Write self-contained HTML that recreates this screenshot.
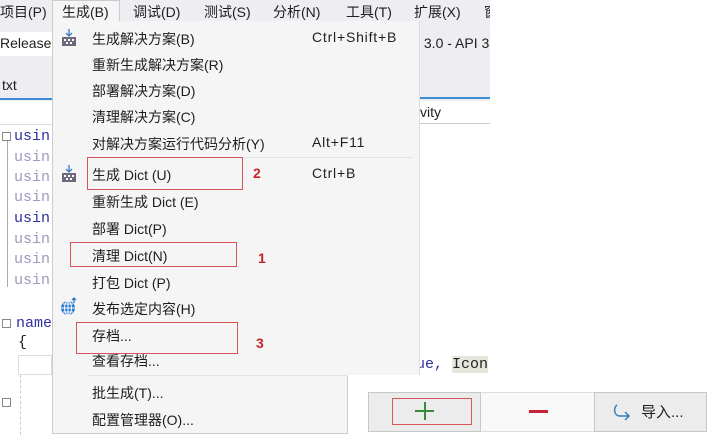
<!DOCTYPE html>
<html><head><meta charset="utf-8"><style>
*{margin:0;padding:0;box-sizing:border-box}
body{width:716px;height:436px;overflow:hidden;background:#fff;position:relative;font-family:"Liberation Sans","Noto Sans CJK SC",sans-serif;font-size:14px;color:#1e1e1e}
.a{position:absolute;white-space:nowrap}
.mono{font-family:"Liberation Mono","Noto Sans CJK SC",monospace;font-size:15px}
.rb{position:absolute;border:1.5px solid #d9545b}
.num{position:absolute;color:#c8222b;font-weight:bold;font-size:14px}
.sc{letter-spacing:0.8px}
</style></head><body>
<!-- menu bar -->
<div class="a" style="left:0;top:0;width:490px;height:21px;background:#eeeef2"></div>
<div class="a" style="left:52px;top:0;width:68px;height:22px;background:#f5f5f5;border:1px solid #ccc;border-bottom:none"></div>
<div class="a" style="left:0;top:2px">项目(P)</div>
<div class="a" style="left:62px;top:2px">生成(B)</div>
<div class="a" style="left:133px;top:2px">调试(D)</div>
<div class="a" style="left:204px;top:2px">测试(S)</div>
<div class="a" style="left:273px;top:2px">分析(N)</div>
<div class="a" style="left:346px;top:2px">工具(T)</div>
<div class="a" style="left:414px;top:2px">扩展(X)</div>
<div class="a" style="left:484px;top:2px;width:6px;overflow:hidden">窗</div>
<!-- left panel -->
<div class="a" style="left:0;top:21px;width:52px;height:80px;background:#eeeef2"></div>
<div class="a" style="left:0;top:32px;width:52px;height:24px;background:#fff"></div>
<div class="a" style="left:0;top:35px">Release</div>
<div class="a" style="left:2px;top:77px">txt</div>
<div class="a" style="left:0;top:98px;width:52px;height:2px;background:#3b8ed6"></div>
<div class="a" style="left:0;top:124px;width:52px;height:1px;background:#ddd"></div>
<!-- right of menu -->
<div class="a" style="left:420px;top:21px;width:70px;height:80px;background:#eeeef2"></div>
<div class="a" style="left:420px;top:35px;width:70px;overflow:hidden">&nbsp;3.0 - API 33</div>
<div class="a" style="left:420px;top:97px;width:70px;height:2px;background:#3b8ed6"></div>
<div class="a" style="left:420px;top:104px;">vity</div>
<div class="a" style="left:420px;top:123px;width:70px;height:1px;background:#ccc"></div>
<!-- code -->
<div class="a" style="left:2px;top:132px;width:9px;height:9px;border:1px solid #888"></div>
<div class="a" style="left:7px;top:141px;width:1px;height:146px;background:#aaa"></div>
<div class="a mono" style="left:14px;top:128px;color:#3030a0">usin</div>
<div class="a mono" style="left:14px;top:149px;color:#9a9ac0">usin</div>
<div class="a mono" style="left:14px;top:169px;color:#9a9ac0">usin</div>
<div class="a mono" style="left:14px;top:189px;color:#9a9ac0">usin</div>
<div class="a mono" style="left:14px;top:210px;color:#3030a0">usin</div>
<div class="a mono" style="left:14px;top:231px;color:#9a9ac0">usin</div>
<div class="a mono" style="left:14px;top:251px;color:#9a9ac0">usin</div>
<div class="a mono" style="left:14px;top:272px;color:#9a9ac0">usin</div>
<div class="a" style="left:2px;top:319px;width:9px;height:9px;border:1px solid #888"></div>
<div class="a mono" style="left:16px;top:315px;color:#3030a0">name</div>
<div class="a mono" style="left:18px;top:334px">{</div>
<div class="a" style="left:18px;top:355px;width:34px;height:20px;border:1px solid #ddd"></div>
<div class="a" style="left:2px;top:398px;width:9px;height:9px;border:1px solid #888"></div>
<div class="a" style="left:20px;top:375px;width:1px;height:60px;border-left:1px dashed #ccc"></div>
<div class="a mono" style="left:416px;top:356px;color:#3030a0">ue,&nbsp;<span style="background:#e6e6dc;color:#222">Icon</span></div>
<!-- dropdown -->
<div class="a" style="left:52px;top:21px;width:368px;height:354px;background:#f5f5f5;border-left:1px solid #ccc;border-right:1px solid #ddd"></div>
<div class="a" style="left:52px;top:375px;width:296px;height:59px;background:#f5f5f5;border:1px solid #ccc;border-top:none"></div>
<div class="a" style="left:88px;top:157px;width:325px;height:1px;background:#e2e2e2"></div>
<div class="a" style="left:88px;top:375px;width:260px;height:1px;background:#e2e2e2"></div>
<svg class="a" style="left:60px;top:28px" width="18" height="20"><path d="M9 1v6M6 5l3 3 3-3" stroke="#3a7cc0" fill="none" stroke-width="1.3"/><rect x="2" y="9" width="14" height="9" fill="#6a6a7a"/><g fill="#fff"><rect x="4" y="11" width="2" height="2"/><rect x="8" y="11" width="2" height="2"/><rect x="12" y="11" width="2" height="2"/><rect x="6" y="14" width="2" height="2"/><rect x="10" y="14" width="2" height="2"/></g></svg>
<svg class="a" style="left:60px;top:164px" width="18" height="20"><path d="M9 1v6M6 5l3 3 3-3" stroke="#3a7cc0" fill="none" stroke-width="1.3"/><rect x="2" y="9" width="14" height="9" fill="#6a6a7a"/><g fill="#fff"><rect x="4" y="11" width="2" height="2"/><rect x="8" y="11" width="2" height="2"/><rect x="12" y="11" width="2" height="2"/><rect x="6" y="14" width="2" height="2"/><rect x="10" y="14" width="2" height="2"/></g></svg>
<svg class="a" style="left:59px;top:297px" width="20" height="20"><circle cx="9" cy="11" r="7" fill="#2a7cd0"/><path d="M2 11h14M9 4v14M4 7h10M4 15h10" stroke="#fff" stroke-width="1"/><ellipse cx="9" cy="11" rx="3.5" ry="7" fill="none" stroke="#fff"/><path d="M15 1v5M13 3l2-2 2 2" stroke="#2a7cd0" fill="none" stroke-width="1.3"/></svg>
<div class="a" style="left:92px;top:29px">生成解决方案(B)</div><div class="a sc" style="left:312px;top:29px">Ctrl+Shift+B</div>
<div class="a" style="left:92px;top:55px">重新生成解决方案(R)</div>
<div class="a" style="left:92px;top:81px">部署解决方案(D)</div>
<div class="a" style="left:92px;top:107px">清理解决方案(C)</div>
<div class="a" style="left:92px;top:134px">对解决方案运行代码分析(Y)</div><div class="a sc" style="left:312px;top:134px">Alt+F11</div>
<div class="a" style="left:92px;top:165px">生成 Dict (U)</div><div class="a sc" style="left:312px;top:165px">Ctrl+B</div>
<div class="a" style="left:92px;top:192px">重新生成 Dict (E)</div>
<div class="a" style="left:92px;top:219px">部署 Dict(P)</div>
<div class="a" style="left:92px;top:246px">清理 Dict(N)</div>
<div class="a" style="left:92px;top:273px">打包 Dict (P)</div>
<div class="a" style="left:92px;top:299px">发布选定内容(H)</div>
<div class="a" style="left:92px;top:326px">存档...</div>
<div class="a" style="left:92px;top:351px">查看存档...</div>
<div class="a" style="left:92px;top:383px">批生成(T)...</div>
<div class="a" style="left:92px;top:410px">配置管理器(O)...</div>
<div class="rb" style="left:87px;top:157px;width:156px;height:33px"></div>
<div class="rb" style="left:70px;top:242px;width:167px;height:25px"></div>
<div class="rb" style="left:76px;top:322px;width:162px;height:32px"></div>
<div class="num" style="left:253px;top:165px">2</div>
<div class="num" style="left:258px;top:250px">1</div>
<div class="num" style="left:256px;top:335px">3</div>
<!-- button panel -->
<div class="a" style="left:348px;top:378px;width:368px;height:58px;background:#fff"></div>
<div class="a" style="left:368px;top:392px;width:113px;height:40px;background:#ececec;border:1px solid #c8c8c8"></div>
<div class="a" style="left:481px;top:392px;width:113px;height:40px;background:#f8f8f8;border-top:1px solid #ddd;border-bottom:1px solid #ddd"></div>
<div class="a" style="left:594px;top:392px;width:113px;height:40px;background:#ececec;border:1px solid #c8c8c8"></div>
<div class="rb" style="left:392px;top:398px;width:80px;height:27px"></div>
<div class="a" style="left:424px;top:402px;width:1.5px;height:18px;background:#3a8a3a"></div>
<div class="a" style="left:415px;top:410px;width:19px;height:1.5px;background:#3a8a3a"></div>
<div class="a" style="left:529px;top:410px;width:19px;height:3px;background:#c8223a"></div>
<svg class="a" style="left:611px;top:402px" width="22" height="20"><path d="M6 3C2 6 3 14 9 14h9M14 10l4 4-4 4" stroke="#3a7cc0" fill="none" stroke-width="1.5"/></svg>
<div class="a" style="left:641px;top:401px;font-size:15px">导入...</div>
</body></html>
